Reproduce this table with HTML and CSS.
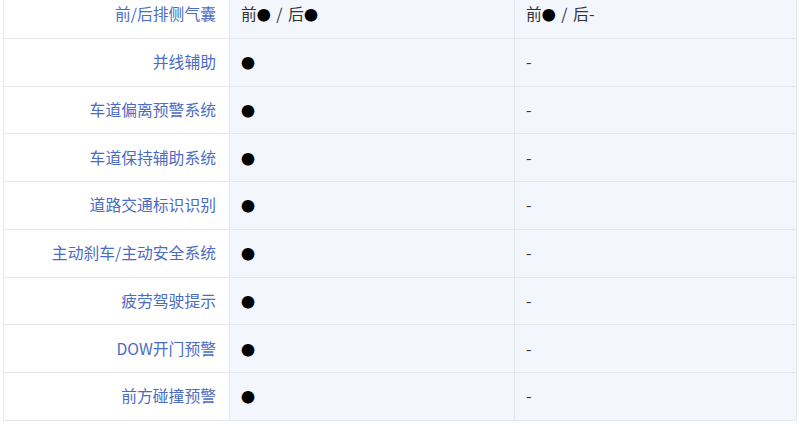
FILE: index.html
```html
<!DOCTYPE html>
<html lang="zh-CN">
  <head>
    <meta charset="UTF-8" />
    <meta name="viewport" content="width=device-width, initial-scale=1.0" />
    <title>配置参数</title>
    <link rel="stylesheet" href="styles.css">
  </head>
  <body>
    <div class="wrap">
      <table class="params">
        <tr>
          <th>前/后排侧气囊</th>
          <td>前<span class="dot">●</span> / 后<span class="dot">●</span></td>
          <td>前<span class="dot">●</span> / 后-</td>
        </tr>
        <tr>
          <th>并线辅助</th>
          <td><span class="dot">●</span></td>
          <td>-</td>
        </tr>
        <tr>
          <th>车道偏离预警系统</th>
          <td><span class="dot">●</span></td>
          <td>-</td>
        </tr>
        <tr>
          <th>车道保持辅助系统</th>
          <td><span class="dot">●</span></td>
          <td>-</td>
        </tr>
        <tr>
          <th>道路交通标识识别</th>
          <td><span class="dot">●</span></td>
          <td>-</td>
        </tr>
        <tr>
          <th>主动刹车/主动安全系统</th>
          <td><span class="dot">●</span></td>
          <td>-</td>
        </tr>
        <tr>
          <th>疲劳驾驶提示</th>
          <td><span class="dot">●</span></td>
          <td>-</td>
        </tr>
        <tr>
          <th>DOW开门预警</th>
          <td><span class="dot">●</span></td>
          <td>-</td>
        </tr>
        <tr>
          <th>前方碰撞预警</th>
          <td><span class="dot">●</span></td>
          <td>-</td>
        </tr>
      </table>
    </div>
  </body>
</html>
```

FILE: styles.css
```css
body {
  margin: 0;
  padding: 0;
  background: #fff;
  font-family: "Noto Sans CJK SC", "Noto Sans", sans-serif;
  overflow: hidden;
}
.wrap {
  padding: 0 3px;
}
.params {
  width: 794px;
  margin-top: -10px;
  border-collapse: collapse;
  table-layout: fixed;
  font-size: 15.8px;
  border-bottom: 1px solid #e3e7ee;
}
.params th,
.params td {
  height: 46.75px;
  padding: 0;
  border: 1px solid #e3e7ee;
  vertical-align: middle;
  line-height: 20px;
}
.params th {
  width: 212px;
  padding-right: 13px;
  text-align: right;
  font-weight: normal;
  color: #4b6cc5;
  background: #fff;
}
.params td {
  padding-left: 11px;
  color: #333;
  background: #f3f6fc;
  word-spacing: 2px;
}
.params td:nth-child(2) {
  width: 273px;
}
.dot {
  color: #000;
  font-size: 14px;
}
```
